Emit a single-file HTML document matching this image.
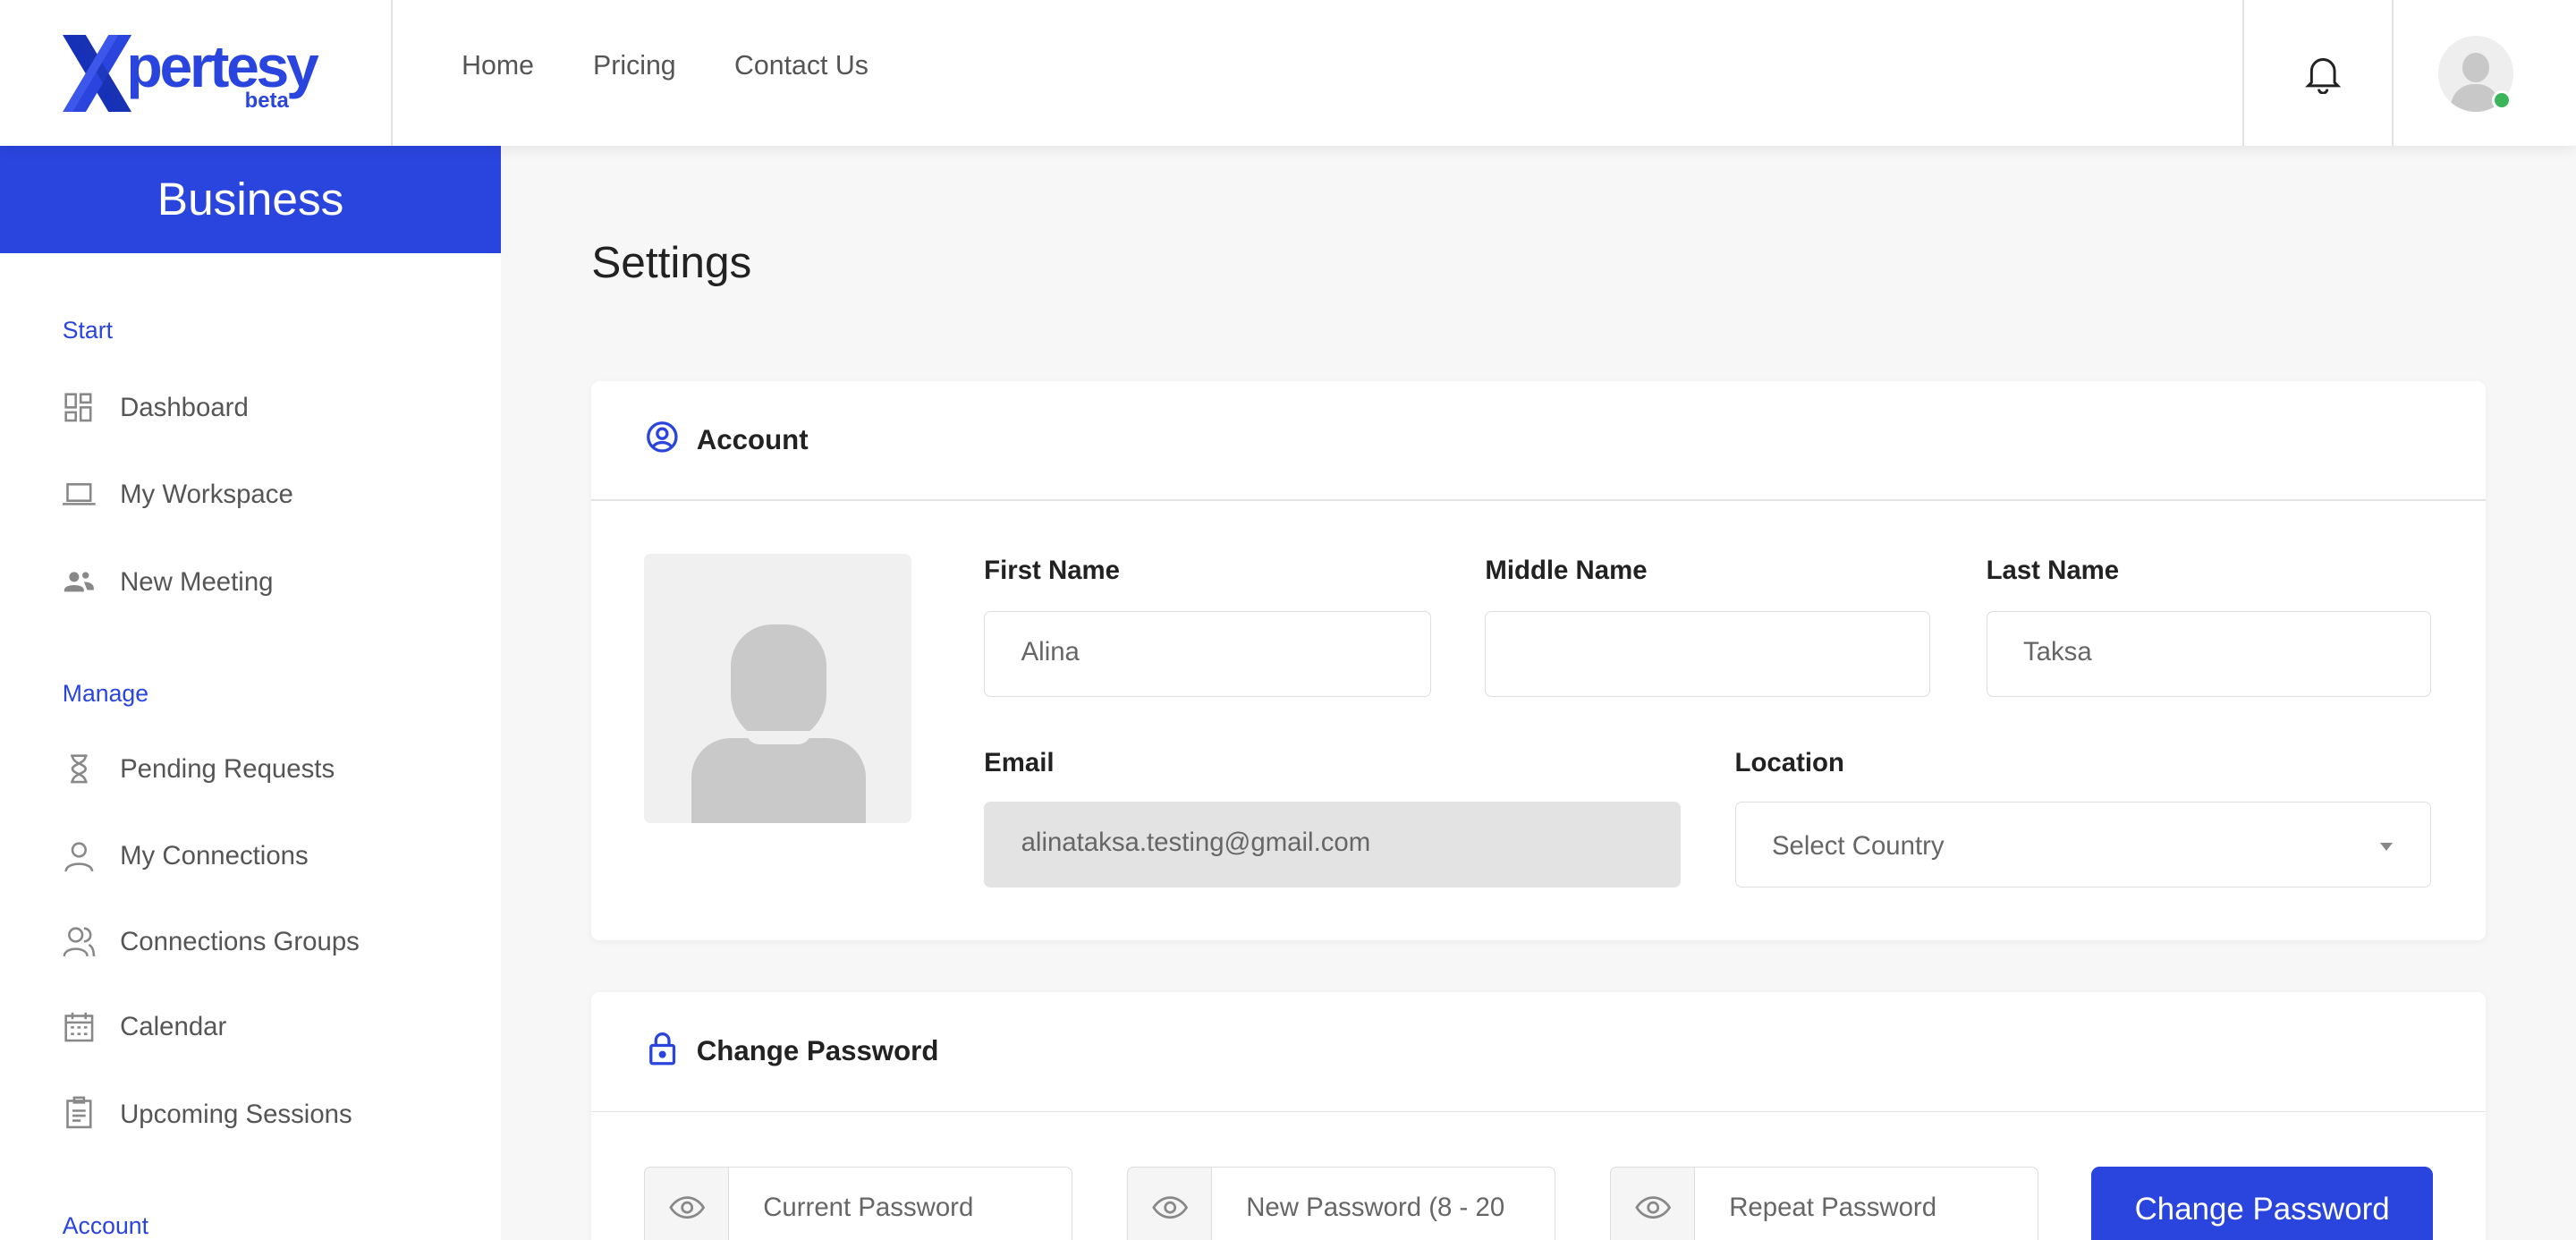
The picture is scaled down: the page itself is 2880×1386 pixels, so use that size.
<!DOCTYPE html>
<html><head><meta charset="utf-8"><style>
*{box-sizing:border-box;margin:0;padding:0}
html,body{width:2880px;height:1386px;overflow:hidden;background:#f7f7f7}
#r{zoom:1.8367;width:1568px;height:755px;position:relative;font-family:"Liberation Sans",sans-serif;color:#333}
.a{position:absolute}
.hdr{left:0;top:0;width:1568px;height:89px;background:#fff;box-shadow:0 2px 8px rgba(0,0,0,.08);z-index:2}
.nav{top:31px;font-size:16.5px;color:#555}
.side{left:0;top:89px;width:305px;height:666px;background:#fff}
.sec{left:38px;font-size:14.5px;color:#2a45de}
.it{left:73px;font-size:16px;color:#555}
.ic{left:38px;width:20px;height:20px}
.card{background:#fff;border-radius:5px;box-shadow:0 1px 4px rgba(0,0,0,.05)}
.lbl{font-size:16px;color:#222;font-weight:bold}
.inp{height:52px;border:1px solid #ddd;border-radius:4px;background:#fff;font-size:16px;color:#666;padding:15px 0 0 22px}
</style></head><body><div id="r">
<div class="a hdr">
 <svg class="a" style="left:38px;top:21px" width="42" height="47" viewBox="0 0 42 47"><polygon points="0,0 14,0 42,47 28,47" fill="#1730b8"/><polygon points="28,0 42,0 14,47 0,47" fill="#2a45de"/><polygon points="7,0 14,0 42,47 35,47" fill="#1a33b0" opacity=".7"/><polygon points="28,0 34,0 6,47 0,47" fill="#3d57ea"/></svg>
 <div class="a" style="left:77px;top:20px;font-size:36px;font-weight:bold;color:#2a45de;letter-spacing:-1.8px">pertesy</div>
 <div class="a" style="left:149px;top:54px;font-size:13px;font-weight:bold;color:#2a45de">beta</div>
 <div class="a" style="left:238px;top:0;width:1px;height:89px;background:#e3e3e3"></div>
 <div class="a nav" style="left:281px">Home</div>
 <div class="a nav" style="left:361px">Pricing</div>
 <div class="a nav" style="left:447px">Contact Us</div>
 <div class="a" style="left:1365px;top:0;width:1px;height:89px;background:#e3e3e3"></div>
 <div class="a" style="left:1456px;top:0;width:1px;height:89px;background:#e3e3e3"></div>
 <svg class="a" style="left:1403px;top:33px" width="22" height="24" viewBox="0 0 22 24" fill="none" stroke="#222" stroke-width="1.6"><path d="M4 17V10a7 7 0 0 1 14 0v7l2 2H2z"/><path d="M8.5 21a2.5 2.5 0 0 0 5 0"/></svg>
 <div class="a" style="left:1484px;top:22px;width:46px;height:46px;border-radius:50%;background:#eee;overflow:hidden"><div class="a" style="left:15px;top:10px;width:16px;height:18px;border-radius:50%;background:#c8c8c8"></div><div class="a" style="left:8px;top:29px;width:30px;height:22px;border-radius:14px 14px 0 0;background:#c8c8c8"></div></div>
 <div class="a" style="left:1517px;top:55px;width:12px;height:12px;border-radius:50%;background:#3cb55a;border:2px solid #fff"></div>
</div>
<div class="a side">
 <div class="a" style="left:0;top:0;width:305px;height:65px;background:#2a45de;color:#fff;font-size:28px;text-align:center;line-height:65px">Business</div>
</div>
<div class="a sec" style="top:193px">Start</div>
<svg class="a ic" style="top:238px" viewBox="0 0 20 20" fill="none" stroke="#888" stroke-width="1.4"><rect x="2" y="2" width="6" height="8"/><rect x="11" y="2" width="6" height="5"/><rect x="2" y="13" width="6" height="5"/><rect x="11" y="10" width="6" height="8"/></svg>
<div class="a it" style="top:239px">Dashboard</div>
<svg class="a ic" style="top:291px" viewBox="0 0 20 20" fill="none" stroke="#888" stroke-width="1.4"><rect x="3" y="4" width="14" height="10"/><path d="M0 16h20"/></svg>
<div class="a it" style="top:292px">My Workspace</div>
<svg class="a ic" style="top:344px" viewBox="0 0 20 20" fill="#888"><circle cx="7" cy="7" r="3"/><path d="M1 15c0-4 12-4 12 0v1H1z"/><circle cx="14" cy="6" r="2"/><path d="M13 10c3 0 6 1 6 4v1h-4"/></svg>
<div class="a it" style="top:345px">New Meeting</div>
<div class="a sec" style="top:414px">Manage</div>
<svg class="a ic" style="top:458px" viewBox="0 0 20 20" fill="none" stroke="#888" stroke-width="1.4"><path d="M5 2h10M5 18h10M6 2c0 5 8 5 8 8s-8 3-8 8M14 2c0 5-8 5-8 8s8 3 8 8"/></svg>
<div class="a it" style="top:459px">Pending Requests</div>
<svg class="a ic" style="top:511px" viewBox="0 0 20 20" fill="none" stroke="#888" stroke-width="1.4"><circle cx="10" cy="6" r="4"/><path d="M2 19c0-6 16-6 16 0"/></svg>
<div class="a it" style="top:512px">My Connections</div>
<svg class="a ic" style="top:563px" viewBox="0 0 20 20" fill="none" stroke="#888" stroke-width="1.4"><circle cx="8" cy="6" r="4"/><path d="M1 19c0-6 14-6 14 0M13 2a4 4 0 0 1 0 8M16 12c2 1 3 3 3 7"/></svg>
<div class="a it" style="top:564px">Connections Groups</div>
<svg class="a ic" style="top:615px" viewBox="0 0 20 20" fill="none" stroke="#888" stroke-width="1.4"><rect x="2" y="3" width="16" height="15"/><path d="M2 7h16M6 1v4M14 1v4M5 10h2M9 10h2M13 10h2M5 14h2M9 14h2M13 14h2"/></svg>
<div class="a it" style="top:616px">Calendar</div>
<svg class="a ic" style="top:667px" viewBox="0 0 20 20" fill="none" stroke="#888" stroke-width="1.4"><rect x="3" y="3" width="14" height="16"/><rect x="7" y="1" width="6" height="3"/><path d="M6 9h8M6 12h8M6 15h5"/></svg>
<div class="a it" style="top:669px">Upcoming Sessions</div>
<div class="a sec" style="top:738px">Account</div>

<div class="a" style="left:360px;top:144px;font-size:27px;color:#222">Settings</div>
<div class="a card" style="left:360px;top:232px;width:1153px;height:340px"></div>
<div class="a" style="left:360px;top:304px;width:1153px;height:1px;background:#e3e3e3"></div>
<svg class="a" style="left:393px;top:256px" width="20" height="20" viewBox="0 0 20 20" fill="none" stroke="#2a45de" stroke-width="1.8"><circle cx="10" cy="10" r="8.5"/><circle cx="10" cy="8" r="3"/><path d="M4.5 16c2-3.5 9-3.5 11 0"/></svg>
<div class="a" style="left:424px;top:258px;font-size:17px;color:#222;font-weight:bold">Account</div>
<div class="a" style="left:392px;top:337px;width:163px;height:164px;background:#f0f0f0;border-radius:4px;overflow:hidden">
 <div class="a" style="left:53px;top:43px;width:58px;height:72px;border-radius:26px 26px 30px 30px;background:#c9c9c9"></div>
 <div class="a" style="left:29px;top:112px;width:106px;height:60px;border-radius:24px 24px 0 0;background:#c9c9c9"></div>
 <div class="a" style="left:62px;top:108px;width:40px;height:8px;border-radius:0 0 20px 20px;background:#f0f0f0"></div>
</div>
<div class="a lbl" style="left:599px;top:338px">First Name</div>
<div class="a lbl" style="left:904px;top:338px">Middle Name</div>
<div class="a lbl" style="left:1209px;top:338px">Last Name</div>
<div class="a inp" style="left:599px;top:372px;width:272px">Alina</div>
<div class="a inp" style="left:904px;top:372px;width:271px"></div>
<div class="a inp" style="left:1209px;top:372px;width:271px">Taksa</div>
<div class="a lbl" style="left:599px;top:455px">Email</div>
<div class="a lbl" style="left:1056px;top:455px">Location</div>
<div class="a inp" style="left:599px;top:488px;width:424px;background:#e3e3e3;border-color:#e3e3e3">alinataksa.testing@gmail.com</div>
<div class="a inp" style="left:1056px;top:488px;width:424px;padding-top:17px">Select Country</div>
<div class="a" style="left:1449px;top:513px;border:4px solid transparent;border-top:5px solid #888"></div>

<div class="a card" style="left:360px;top:604px;width:1153px;height:160px"></div>
<div class="a" style="left:360px;top:676px;width:1153px;height:1px;background:#e3e3e3"></div>
<svg class="a" style="left:395px;top:627px" width="17" height="22" viewBox="0 0 17 22" fill="none" stroke="#2a45de" stroke-width="1.8"><rect x="1.5" y="9" width="14" height="11" rx="1"/><path d="M4.5 9V6a4 4 0 0 1 8 0v3"/><circle cx="8.5" cy="14.5" r="1.3" fill="#2a45de"/></svg>
<div class="a" style="left:424px;top:630px;font-size:17px;color:#222;font-weight:bold">Change Password</div>
<div class="a inp" style="left:392px;top:710px;width:261px;padding-left:72px">Current Password</div>
<div class="a inp" style="left:686px;top:710px;width:261px;padding-left:72px;white-space:nowrap;overflow:hidden">New Password (8 - 20</div>
<div class="a inp" style="left:980px;top:710px;width:261px;padding-left:72px">Repeat Password</div>
<div class="a" style="left:392px;top:710px;width:52px;height:52px;background:#f5f5f5;border:1px solid #ddd;border-radius:4px 0 0 4px"></div>
<div class="a" style="left:686px;top:710px;width:52px;height:52px;background:#f5f5f5;border:1px solid #ddd;border-radius:4px 0 0 4px"></div>
<div class="a" style="left:980px;top:710px;width:52px;height:52px;background:#f5f5f5;border:1px solid #ddd;border-radius:4px 0 0 4px"></div>
<svg class="a" style="left:407px;top:727px" width="22" height="16" viewBox="0 0 22 16" fill="none" stroke="#888" stroke-width="1.5"><path d="M1 8c5-8 15-8 20 0c-5 8-15 8-20 0z"/><circle cx="11" cy="8" r="3"/></svg>
<svg class="a" style="left:701px;top:727px" width="22" height="16" viewBox="0 0 22 16" fill="none" stroke="#888" stroke-width="1.5"><path d="M1 8c5-8 15-8 20 0c-5 8-15 8-20 0z"/><circle cx="11" cy="8" r="3"/></svg>
<svg class="a" style="left:995px;top:727px" width="22" height="16" viewBox="0 0 22 16" fill="none" stroke="#888" stroke-width="1.5"><path d="M1 8c5-8 15-8 20 0c-5 8-15 8-20 0z"/><circle cx="11" cy="8" r="3"/></svg>
<div class="a" style="left:1273px;top:710px;width:208px;height:55px;background:#2a45de;border-radius:5px;color:#fff;font-size:19px;text-align:center;padding-top:15px">Change Password</div>
</div></body></html>
